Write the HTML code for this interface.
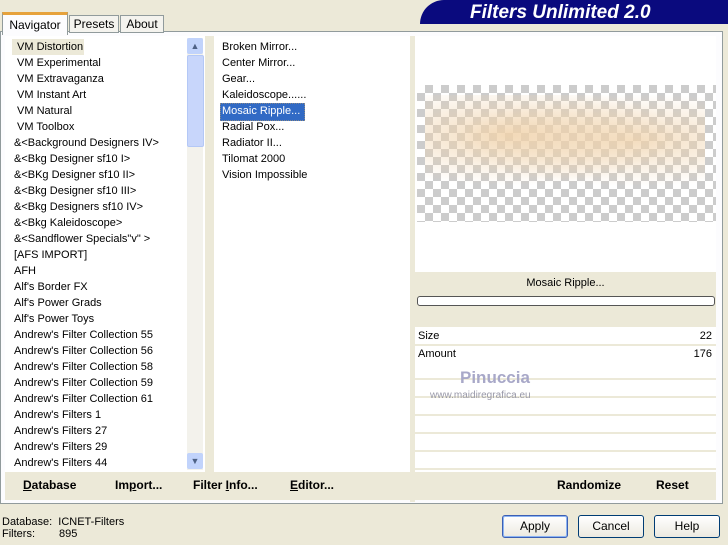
<html><head><style>
body{margin:0;width:728px;height:545px;background:#ece9d8;font-family:"Liberation Sans",sans-serif;font-size:11px;position:relative;overflow:hidden;color:#000}
.a{position:absolute}
.list div{height:16px;line-height:16px;white-space:nowrap}
.btn{position:absolute;top:515px;width:64px;height:21px;border:1px solid #003c74;border-radius:3px;background:linear-gradient(#fff,#ece9e0);text-align:center;line-height:21px;font-size:12px}
.b{font-weight:bold;font-size:12px;position:absolute;top:478px}
</style></head><body>
<div class="a" style="left:420px;top:0;width:308px;height:24px;background:#0a0a7e;border-radius:30px 0 0 0"></div>
<div class="a" style="left:470px;top:2px;color:#fff;font-weight:bold;font-style:italic;font-size:19px">Filters Unlimited 2.0</div>
<div class="a" style="left:0;top:31px;width:721px;height:471px;border:1px solid #919b9c;background:#fcfcfe"></div>
<div class="a" style="left:2px;top:12px;width:64px;height:20px;background:#fcfcfe;border:1px solid #919b9c;border-bottom:none;border-top:3px solid #e6a23c;text-align:center;line-height:20px;font-size:12px">Navigator</div>
<div class="a" style="left:69px;top:15px;width:48px;height:16px;border:1px solid #919b9c;background:#f4f3ee;text-align:center;line-height:17px;font-size:12px">Presets</div>
<div class="a" style="left:120px;top:15px;width:42px;height:16px;border:1px solid #919b9c;background:#f4f3ee;text-align:center;line-height:17px;font-size:12px">About</div>
<div class="a" style="left:5px;top:36px;width:200px;height:436px;background:#fff"></div>
<div class="a" style="left:205px;top:36px;width:9px;height:436px;background:#ece9d8"></div>
<div class="a" style="left:214px;top:36px;width:196px;height:436px;background:#fff"></div>
<div class="a" style="left:410px;top:36px;width:5px;height:466px;background:#ece9d8"></div>
<div class="a" style="left:187px;top:38px;width:16px;height:432px;background:#f3f2ec"></div>
<div class="a" style="left:187px;top:38px;width:16px;height:16px;background:#c1d3fb;border-radius:2px;color:#4d6185;text-align:center;font-size:9px;line-height:16px">▲</div>
<div class="a" style="left:187px;top:55px;width:15px;height:90px;background:#c8d6fb;border:1px solid #b4c8f6;border-radius:2px"></div>
<div class="a" style="left:187px;top:453px;width:16px;height:16px;background:#c1d3fb;border-radius:2px;color:#4d6185;text-align:center;font-size:9px;line-height:16px">▼</div>
<div class="a" style="left:12px;top:39px;width:72px;height:16px;background:#ece9d8"></div>
<div class="a list" style="left:14px;top:39px">
<div>&nbsp;VM Distortion</div><div>&nbsp;VM Experimental</div><div>&nbsp;VM Extravaganza</div><div>&nbsp;VM Instant Art</div><div>&nbsp;VM Natural</div><div>&nbsp;VM Toolbox</div><div>&amp;&lt;Background Designers IV&gt;</div><div>&amp;&lt;Bkg Designer sf10 I&gt;</div><div>&amp;&lt;BKg Designer sf10 II&gt;</div><div>&amp;&lt;Bkg Designer sf10 III&gt;</div><div>&amp;&lt;Bkg Designers sf10 IV&gt;</div><div>&amp;&lt;Bkg Kaleidoscope&gt;</div><div>&amp;&lt;Sandflower Specials"v" &gt;</div><div>[AFS IMPORT]</div><div>AFH</div><div>Alf's Border FX</div><div>Alf's Power Grads</div><div>Alf's Power Toys</div><div>Andrew's Filter Collection 55</div><div>Andrew's Filter Collection 56</div><div>Andrew's Filter Collection 58</div><div>Andrew's Filter Collection 59</div><div>Andrew's Filter Collection 61</div><div>Andrew's Filters 1</div><div>Andrew's Filters 27</div><div>Andrew's Filters 29</div><div>Andrew's Filters 44</div></div>
<div class="a" style="left:220px;top:103px;width:83px;height:16px;background:#316ac5;border:1px dotted #888"></div>
<div class="a list" style="left:222px;top:39px">
<div>Broken Mirror...</div><div>Center Mirror...</div><div>Gear...</div><div>Kaleidoscope......</div><div style="color:#fff">Mosaic Ripple...</div><div>Radial Pox...</div><div>Radiator II...</div><div>Tilomat 2000</div><div>Vision Impossible</div></div>
<div class="a" style="left:415px;top:36px;width:301px;height:436px;background:#fff"></div>
<div class="a" style="left:417px;top:85px;width:299px;height:137px;background-color:#fff;background-image:linear-gradient(45deg,#ccc 25%,transparent 25%,transparent 75%,#ccc 75%),linear-gradient(45deg,#ccc 25%,transparent 25%,transparent 75%,#ccc 75%);background-size:16px 16px;background-position:0 0,8px 8px"></div>
<div class="a" style="left:425px;top:95px;width:280px;height:100px;background:radial-gradient(ellipse at 30% 40%,rgba(240,210,170,.8),transparent 60%),radial-gradient(ellipse at 75% 45%,rgba(240,210,170,.7),transparent 60%)"></div>
<div class="a" style="left:415px;top:272px;width:301px;height:55px;background:#ece9d8"></div>
<div class="a" style="left:415px;top:277px;width:301px;text-align:center">Mosaic Ripple...</div>
<div class="a" style="left:417px;top:296px;width:296px;height:8px;border:1px solid #555;border-radius:3px;background:#fff"></div>
<div class="a" style="left:418px;top:330px">Size</div><div class="a" style="left:690px;top:330px;width:22px;text-align:right">22</div>
<div class="a" style="left:418px;top:348px">Amount</div><div class="a" style="left:690px;top:348px;width:22px;text-align:right">176</div>
<div class="a" style="left:415px;top:344px;width:301px;height:2px;background:#ece9d8"></div>
<div class="a" style="left:415px;top:362px;width:301px;height:108px;background:repeating-linear-gradient(#fff 0 16px,#ece9d8 16px 18px)"></div>
<div class="a" style="left:460px;top:368px;color:#a8a8c8;font-size:17px;font-weight:bold">Pinuccia</div>
<div class="a" style="left:430px;top:390px;color:#9898a8;font-size:10px">www.maidiregrafica.eu</div>
<div class="a" style="left:5px;top:472px;width:405px;height:28px;background:#ece9d8"></div>
<div class="a" style="left:415px;top:472px;width:301px;height:28px;background:#ece9d8"></div>
<div class="b" style="left:23px"><u>D</u>atabase</div><div class="b" style="left:115px">Im<u>p</u>ort...</div><div class="b" style="left:193px">Filter <u>I</u>nfo...</div><div class="b" style="left:290px"><u>E</u>ditor...</div>
<div class="b" style="left:557px">Randomize</div><div class="b" style="left:656px">Reset</div>
<div class="a" style="left:2px;top:516px">Database:&nbsp;&nbsp;ICNET-Filters</div>
<div class="a" style="left:2px;top:528px">Filters:<span style="position:absolute;left:57px">895</span></div>
<div class="btn" style="left:502px;border-color:#3c5fb4;box-shadow:inset 0 0 0 1px #8cb4f2">Apply</div>
<div class="btn" style="left:578px">Cancel</div>
<div class="btn" style="left:654px">Help</div>
</body></html>
